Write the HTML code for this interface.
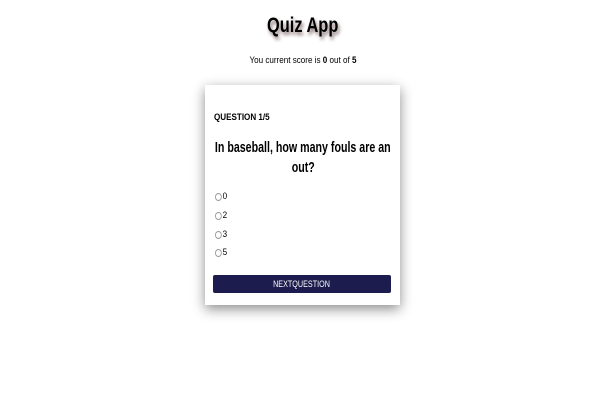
<!DOCTYPE html>
<html><head><style>
body{margin:0;width:606px;height:406px;background:#fff;font-family:"Liberation Sans",sans-serif;color:#000;position:relative;overflow:hidden}
.c{position:absolute;left:0;width:606px;text-align:center}
.s{display:inline-block;transform:scaleX(.78);transform-origin:center;white-space:nowrap}
h1{top:14px;margin:0;font-size:21px;font-weight:bold;text-shadow:2px 3px 4px rgba(60,20,20,.6)}
.score{top:55px;font-size:9.5px}
.card{position:absolute;left:205px;top:85px;width:195px;height:220px;background:#fff;box-shadow:0 4px 12px rgba(0,0,0,.45)}
.q{position:absolute;left:9px;top:27px;font-size:9.5px;font-weight:bold;transform:scaleX(.85);transform-origin:left}
.t{position:absolute;left:-102px;width:400px;text-align:center;font-size:15px;font-weight:bold;line-height:20px}
.t .s{transform:scaleX(.71)}
.o{position:absolute;left:10px;font-size:9.5px;display:flex;align-items:center;transform:scaleX(.85);transform-origin:left}
.o span.r{width:6px;height:6px;border:1px solid #999;border-radius:50%;margin-right:1px}
.b{position:absolute;left:8px;top:190px;width:178px;height:18px;background:#1c1c4e;border-radius:2px;color:#fff;font-size:9px;text-align:center;line-height:18px}
</style></head><body>
<h1 class="c"><span class="s">Quiz App</span></h1>
<div class="c score"><span class="s" style="transform:scaleX(.85)">You current score is <b>0</b> out of <b>5</b></span></div>
<div class="card">
<div class="q">QUESTION 1/5</div>
<div class="t" style="top:53px"><span class="s">In baseball, how many fouls are an</span></div>
<div class="t" style="top:73px"><span class="s">out?</span></div>
<div class="o" style="top:106px"><span class="r"></span>0</div>
<div class="o" style="top:125px"><span class="r"></span>2</div>
<div class="o" style="top:144px"><span class="r"></span>3</div>
<div class="o" style="top:162px"><span class="r"></span>5</div>
<div class="b"><span class="s" style="transform:scaleX(.8)">NEXTQUESTION</span></div>
</div>
</body></html>
